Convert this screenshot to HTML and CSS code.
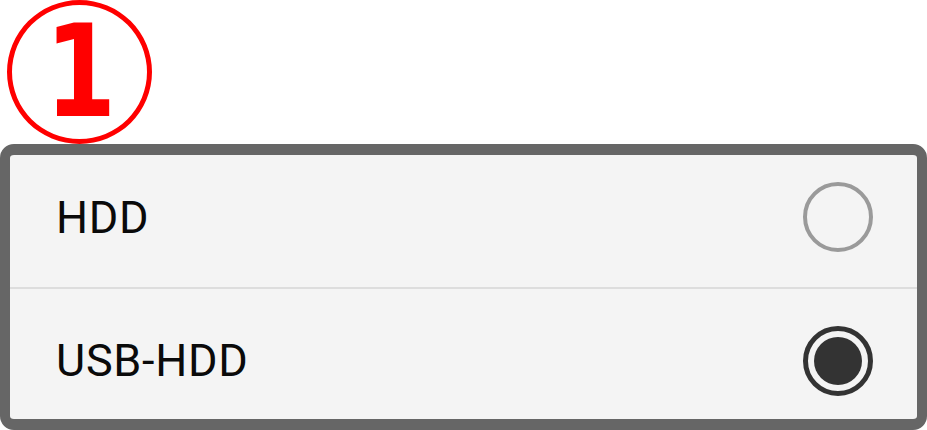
FILE: index.html
```html
<!DOCTYPE html>
<html lang="ja">
<head>
<meta charset="utf-8">
<link rel="stylesheet" href="styles.css">
</head>
<body>
  <div class="badge"><span class="badge-num">1</span></div>
  <div class="panel">
    <div class="row row-first">
      <span class="label">HDD</span>
      <span class="radio"></span>
    </div>
    <div class="divider"></div>
    <div class="row row-second">
      <span class="label">USB-HDD</span>
      <span class="radio radio-on"><span class="radio-dot"></span></span>
    </div>
  </div>
</body>
</html>
```
FILE: styles.css
```css
html, body {
  margin: 0;
  padding: 0;
  background: #ffffff;
}
body {
  width: 927px;
  height: 430px;
  overflow: hidden;
  font-family: Roboto, "Noto Sans", sans-serif;
}
.badge {
  box-sizing: border-box;
  width: 145px;
  height: 144px;
  margin: 0 0 0 7px;
  border: 5px solid #ff0000;
  border-radius: 50%;
  display: flex;
  align-items: center;
  justify-content: center;
}
.badge-num {
  font-family: "DejaVu Sans", sans-serif;
  font-weight: bold;
  font-size: 128px;
  line-height: 128px;
  color: #ff0000;
  display: inline-block;
  transform: translate(1px, 0) scaleX(0.8);
}
.panel {
  box-sizing: border-box;
  height: 286px;
  border-style: solid;
  border-color: #666666;
  border-width: 11px 10px 11px 10px;
  border-radius: 14px;
  background: #f4f4f4;
  display: flex;
  flex-direction: column;
}
.row {
  display: flex;
  align-items: center;
  justify-content: space-between;
  box-sizing: border-box;
  padding-left: 46px;
  padding-right: 44px;
}
.row-first {
  height: 132px;
  padding-bottom: 8px;
}
.row-second {
  height: 130px;
  padding-top: 13px;
}
.divider {
  height: 2px;
  background: #dddddd;
}
.label {
  font-size: 45px;
  letter-spacing: 0.7px;
  color: #0a0a0a;
  line-height: 1;
}
.radio {
  box-sizing: border-box;
  width: 70px;
  height: 70px;
  border-radius: 50%;
  border: 4.5px solid #9a9a9a;
  display: flex;
  align-items: center;
  justify-content: center;
}
.radio-on {
  border: 5px solid #333333;
}
.radio-dot {
  width: 48px;
  height: 48px;
  border-radius: 50%;
  background: #333333;
}
```
